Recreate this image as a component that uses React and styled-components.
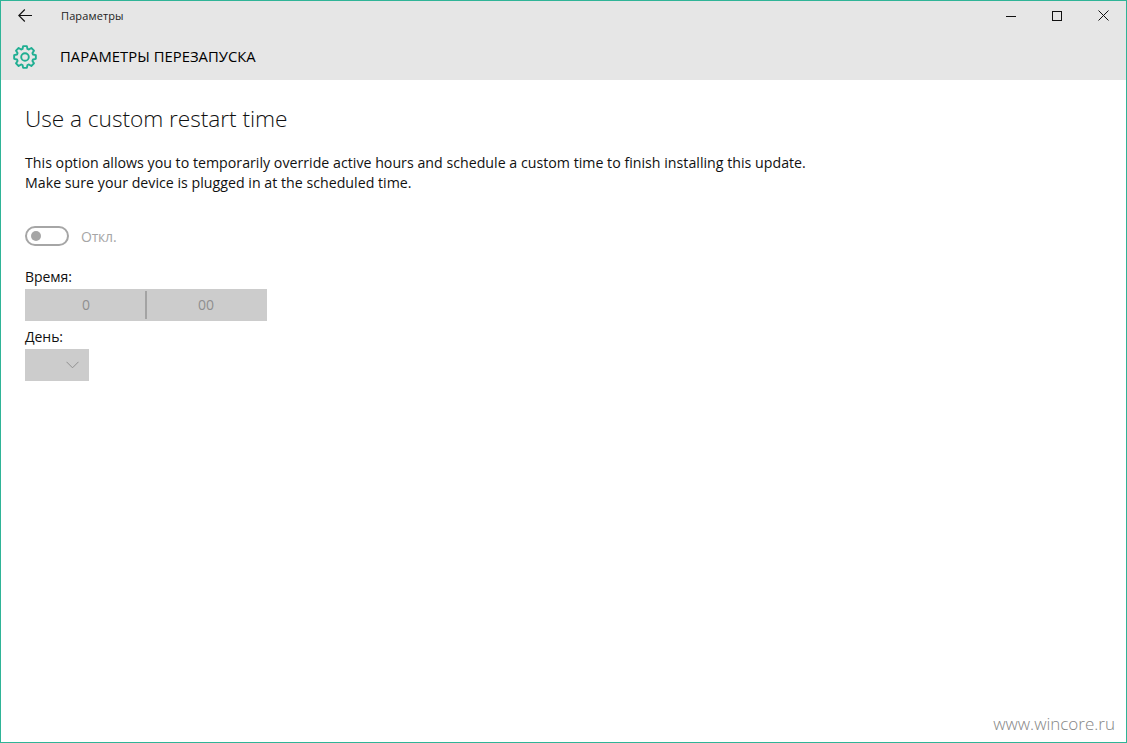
import React from "react";
import styled, { createGlobalStyle } from "styled-components";

const GlobalStyle = createGlobalStyle`
  html, body {
    margin: 0;
    padding: 0;
    background: #fff;
  }
  * {
    box-sizing: border-box;
  }
`;

const Window = styled.div`
  position: relative;
  width: 1127px;
  height: 743px;
  border: 1px solid #2fb497;
  font-family: "Open Sans", "Noto Sans", sans-serif;
  color: #000;
  overflow: hidden;
`;

const Header = styled.header`
  background: #e6e6e6;
  height: 79px;
  display: flex;
  flex-direction: column;
`;

const TitleBar = styled.div`
  display: flex;
  align-items: center;
  height: 29px;
  padding-left: 17px;
`;

const BackButton = styled.div`
  display: flex;
  width: 43px;
`;

const WindowTitle = styled.div`
  font-size: 11px;
  color: #222;
  flex: 1;
  letter-spacing: 0.12px;
`;

const Controls = styled.div`
  display: flex;
  align-items: center;
`;

const ControlButton = styled.div`
  width: 46px;
  height: 29px;
  display: flex;
  align-items: center;
  justify-content: center;
`;

const PageBar = styled.div`
  display: flex;
  align-items: center;
  gap: 23px;
  padding: 3px 0 0 12px;
  height: 50px;
`;

const PageTitle = styled.h1`
  margin: 0;
  padding-bottom: 2px;
  font-size: 14.8px;
  font-weight: 500;
  letter-spacing: 0.03px;
  color: #000;
`;

const Content = styled.main`
  padding: 22px 24px 0;
`;

const Heading = styled.h2`
  margin: 0;
  font-size: 22.7px;
  font-weight: 300;
  line-height: 34px;
  letter-spacing: -0.05px;
  color: #111;
`;

const Description = styled.p`
  margin: 17px 0 0;
  font-size: 14.2px;
  line-height: 20px;
  letter-spacing: 0.01px;
  color: #111;
`;

const ToggleRow = styled.div`
  display: flex;
  align-items: center;
  gap: 12px;
  margin-top: 33px;
`;

const Track = styled.div`
  width: 44px;
  height: 20px;
  border: 2px solid #a6a6a6;
  border-radius: 10px;
  display: flex;
  align-items: center;
  padding-left: 4px;
`;

const Knob = styled.div`
  width: 10px;
  height: 10px;
  border-radius: 50%;
  background: #a6a6a6;
`;

const ToggleLabel = styled.span`
  font-size: 14px;
  color: #a6a6a6;
  letter-spacing: -0.2px;
`;

const FieldLabel = styled.div`
  font-size: 14px;
  line-height: 20px;
  letter-spacing: -0.05px;
  color: #111;
  margin-top: ${(p) => p.$top}px;
  margin-bottom: 2px;
`;

const TimePicker = styled.div`
  display: flex;
  align-items: center;
  width: 242px;
  height: 32px;
  background: #cccccc;
`;

const TimeCell = styled.div`
  flex: 1;
  height: 28px;
  display: flex;
  align-items: center;
  justify-content: center;
  font-size: 14px;
  color: #8f8f8f;
  padding: 0 0 2px 2px;
  & + & {
    border-left: 2px solid #a3a3a3;
    padding: 0 2px 2px 0;
  }
`;

const DaySelect = styled.div`
  width: 64px;
  height: 32px;
  background: #cccccc;
  display: flex;
  align-items: center;
  justify-content: flex-end;
  padding-right: 10px;
`;

const Watermark = styled.div`
  position: absolute;
  right: 11px;
  bottom: 7px;
  font-size: 17px;
  font-weight: 300;
  color: #858585;
`;

// 8 tooth gear outline, centred on 12,12
const gearOutline = () => {
  const point = (r, a) => `${(12 + r * Math.cos(a)).toFixed(2)} ${(12 + r * Math.sin(a)).toFixed(2)}`;
  const step = Math.PI / 4;
  let d = "";
  for (let i = 0; i < 8; i++) {
    const a = i * step - Math.PI / 2;
    d += `${i === 0 ? "M" : "L"}${point(8.4, a - 0.3)} L${point(11, a - 0.17)} L${point(11, a + 0.17)} L${point(8.4, a + 0.3)} `;
  }
  return d + "Z";
};

const GearIcon = () => (
  <svg width="24" height="24" viewBox="0 0 24 24" fill="none" stroke="#1fae92" strokeWidth="1.9" strokeLinejoin="round">
    <path d={gearOutline()} />
    <circle cx="12" cy="12" r="3.8" />
  </svg>
);

export default function App() {
  return (
    <>
      <GlobalStyle />
      <Window>
        <Header>
          <TitleBar>
            <BackButton>
              <svg width="14" height="13" viewBox="0 0 14 13" fill="none" stroke="#111" strokeWidth="1.1">
                <path d="M0.8 6.5H14M6.8 0.5L0.8 6.5L6.8 12.5" />
              </svg>
            </BackButton>
            <WindowTitle>Параметры</WindowTitle>
            <Controls>
              <ControlButton>
                <svg width="10" height="10" viewBox="0 0 10 10" stroke="#111" strokeWidth="1">
                  <path d="M0 5.5H10" />
                </svg>
              </ControlButton>
              <ControlButton>
                <svg width="10" height="10" viewBox="0 0 10 10" fill="none" stroke="#111" strokeWidth="1">
                  <rect x="0.5" y="0.5" width="9" height="9" />
                </svg>
              </ControlButton>
              <ControlButton>
                <svg width="11" height="11" viewBox="0 0 11 11" stroke="#111" strokeWidth="1">
                  <path d="M0.5 0.5L10.5 10.5M10.5 0.5L0.5 10.5" />
                </svg>
              </ControlButton>
            </Controls>
          </TitleBar>
          <PageBar>
            <GearIcon />
            <PageTitle>ПАРАМЕТРЫ ПЕРЕЗАПУСКА</PageTitle>
          </PageBar>
        </Header>
        <Content>
          <Heading>Use a custom restart time</Heading>
          <Description>
            This option allows you to temporarily override active hours and schedule a custom time to finish installing this update.
            <br />
            Make sure your device is plugged in at the scheduled time.
          </Description>
          <ToggleRow>
            <Track>
              <Knob />
            </Track>
            <ToggleLabel>Откл.</ToggleLabel>
          </ToggleRow>
          <FieldLabel $top={21}>Время:</FieldLabel>
          <TimePicker>
            <TimeCell>0</TimeCell>
            <TimeCell>00</TimeCell>
          </TimePicker>
          <FieldLabel $top={6}>День:</FieldLabel>
          <DaySelect>
            <svg width="13" height="8" viewBox="0 0 13 8" fill="none" stroke="#8f8f8f" strokeWidth="1">
              <path d="M0.5 0.8L6.5 6.8L12.5 0.8" />
            </svg>
          </DaySelect>
        </Content>
        <Watermark>www.wincore.ru</Watermark>
      </Window>
    </>
  );
}
